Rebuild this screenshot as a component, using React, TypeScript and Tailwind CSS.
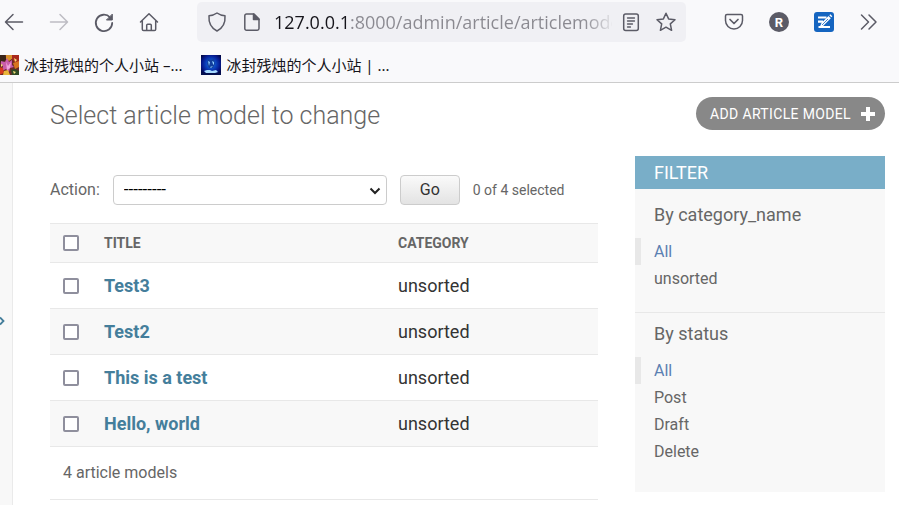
import React from "react";

const stroke = {
  fill: "none",
  stroke: "currentColor",
  strokeWidth: 1.5,
  strokeLinecap: "round" as const,
  strokeLinejoin: "round" as const,
};

function Icon({ children }: { children: React.ReactNode }) {
  return (
    <svg viewBox="0 0 24 24" className="size-6" aria-hidden="true" {...stroke}>
      {children}
    </svg>
  );
}

function ToolButton({ label, dim, children }: { label: string; dim?: boolean; children: React.ReactNode }) {
  return (
    <button type="button" aria-label={label} disabled={dim} className={dim ? "shrink-0 text-[#bdbcc3]" : "shrink-0 text-[#5b5b66]"}>
      {children}
    </button>
  );
}

function FlowerFavicon() {
  return (
    <svg viewBox="1 0 19 20" className="h-5 w-[19px] shrink-0" aria-hidden="true">
      <rect width="20" height="20" fill="#6b2a26" />
      <path d="M0 0h6l2 4-5 4-3-1z" fill="#3a2418" />
      <path d="M7 0h6l1 3-4 3-3-2z" fill="#d8902c" />
      <path d="M13 0h7v7l-4 1-3-4z" fill="#a8281c" />
      <path d="M2 6l4 1 2-4 2 4 3-2v5l2 2-4 1-1 4-3-3-4 2 1-5-2-2z" fill="#c95cab" />
      <path d="M7 7l2 4 3-4-1 6-3 2z" fill="#efa6dc" />
      <path d="M0 12l4 1 1 5-5 2z" fill="#d83a1e" />
      <path d="M5 16l4-1 2 5H4z" fill="#e9b63a" />
      <path d="M14 8l6-2v6l-4 2z" fill="#d8741f" />
      <path d="M12 15l4-1 4 2v4h-7z" fill="#2f4a24" />
      <path d="M15 3l3 2-2 2zM2 9l2 1-2 2zM14 16l3 1-2 2z" fill="#f6e27a" />
    </svg>
  );
}

function NightFavicon() {
  return (
    <svg viewBox="0 0 20 20" className="size-5 shrink-0" aria-hidden="true">
      <defs>
        <radialGradient id="glow" cx="0.5" cy="0.45" r="0.6">
          <stop offset="0" stopColor="#3f9cf0" />
          <stop offset="0.35" stopColor="#0c4cc8" />
          <stop offset="0.75" stopColor="#061a8e" />
          <stop offset="1" stopColor="#030a4a" />
        </radialGradient>
      </defs>
      <rect width="20" height="20" fill="url(#glow)" />
      <path d="M7 4l3 1 3-1 1 5-2 4H8L6 9z" fill="#123f9c" />
      <path d="M7 6l2 1-1 4zM11 6l2 1v3l-1-1zM9 12l3-1-2 2z" fill="#8fd0ff" />
      <path d="M3 16l3-1h3l2 1 4-1 2 2-3 1H5z" fill="#a8dcff" />
      <path d="M0 18h20v2H0z" fill="#04104f" />
    </svg>
  );
}

function Toolbar() {
  return (
    <div className="flex h-11 items-center pr-[18px] pl-0.5">
      <nav className="flex items-center gap-[21px]" aria-label="Navigation">
        <ToolButton label="Back">
          <Icon>
            <path d="M20.500 12H4M11 4.500 3.500 12l7.500 7.500" />
          </Icon>
        </ToolButton>
        <ToolButton label="Forward" dim>
          <Icon>
            <path d="M3.500 12H20M13 4.500l7.500 7.500-7.500 7.500" />
          </Icon>
        </ToolButton>
        <ToolButton label="Reload">
          <Icon>
            <path d="M18 7.300A8.200 8.200 0 1 0 20.200 13" strokeWidth="1.800" />
            <path d="M20.300 4.500v5.500h-5.500z" fill="currentColor" strokeWidth="1" />
          </Icon>
        </ToolButton>
        <ToolButton label="Home">
          <Icon>
            <path d="M3.500 12 12 3.800l8.500 8.200M5.300 10.500v8.700a1.300 1.300 0 0 0 1.300 1.300h10.800a1.300 1.300 0 0 0 1.300-1.300v-8.700M9.700 20.300v-5a1 1 0 0 1 1-1h2.600a1 1 0 0 1 1 1v5" />
          </Icon>
        </ToolButton>
      </nav>

      <div className="mr-9 ml-9 flex h-10 min-w-0 flex-1 items-center rounded-[5px] bg-[#f0f0f4] pr-2 pl-2 text-[#5b5b66]">
        <Icon>
          <path d="M12 3c2.500 1.800 5 2.600 8 2.800.5 6.700-2 12.200-8 15.200-6-3-8.500-8.500-8-15.200C7 5.600 9.500 4.800 12 3z" />
        </Icon>
        <span className="ml-[11px] shrink-0">
          <Icon>
            <path d="M6.500 4h7.500l5 5v9.500a1.700 1.700 0 0 1-1.700 1.700H6.500a1.700 1.700 0 0 1-1.700-1.700V5.700A1.700 1.700 0 0 1 6.500 4z" />
            <path d="M13.500 4v5.500H19z" fill="currentColor" />
          </Icon>
        </span>
        <input
          type="text"
          aria-label="Address"
          defaultValue="127.0.0.1:8000/admin/article/articlemode"
          className="ml-2.5 h-8 min-w-0 flex-1 bg-[linear-gradient(to_right,#15141a_76px,#8a8990_76px,#8a8990_310px,#f0f0f4_342px)] bg-clip-text font-['Open_Sans','Noto_Sans',sans-serif] text-lg text-transparent caret-black outline-none"
        />
        <button type="button" aria-label="Reader view" className="mr-[11px] ml-[7px] shrink-0">
          <Icon>
            <rect x="4.700" y="4" width="14.600" height="16.500" rx="2" />
            <path d="M8.500 8h7M8.500 11h7M8.500 14h5M8.500 17h3" strokeWidth="1.300" />
          </Icon>
        </button>
        <button type="button" aria-label="Bookmark this page" className="shrink-0">
          <Icon>
            <path d="M12 3.200l2.600 5.700 6.400.8-4.700 4.200 1.300 6.400L12 17.200l-5.600 3.100 1.300-6.400L3 9.700l6.400-.8z" />
          </Icon>
        </button>
      </div>

      <div className="flex items-center gap-[21px]">
        <ToolButton label="Save to Pocket">
          <Icon>
            <path d="M5 4.500h14a1.500 1.500 0 0 1 1.500 1.500v4.500a8.500 8.500 0 0 1-17 0V6A1.500 1.500 0 0 1 5 4.500z" />
            <path d="M8 9.500l4 4 4-4" strokeWidth="1.700" />
          </Icon>
        </ToolButton>
        <button type="button" aria-label="R extension" className="flex size-6 shrink-0 items-center justify-center">
          <span className="flex size-5 items-center justify-center rounded-full bg-[#5b5b66] font-['Roboto',sans-serif] text-[13px] leading-none font-bold text-white">R</span>
        </button>
        <ToolButton label="Notes extension">
          <svg viewBox="0 0 24 24" className="size-6" aria-hidden="true">
            <rect x="2" y="2" width="20" height="20" rx="3" fill="#1565c0" />
            <path d="M6 7.500h8.500M6 11.700h5M6.500 17h11.500" stroke="#fff" strokeWidth="2.200" fill="none" />
            <path d="M7.500 17.500l2-4.500 7-7 2.300 2.300-7 7z" fill="#fff" />
            <path d="M17.300 5.200l1-1 2 2-1 1z" fill="#fff" />
            <path d="M10 15l6-6" stroke="#1565c0" strokeWidth="0.800" />
          </svg>
        </ToolButton>
        <ToolButton label="More tools">
          <Icon>
            <path d="M4.500 5l7 7-7 7M12 5l7 7-7 7" />
          </Icon>
        </ToolButton>
      </div>
    </div>
  );
}

function Bookmarks() {
  return (
    <nav aria-label="Bookmarks" className="flex h-[38px] items-center gap-[19px] pt-1 font-['Noto_Sans','Noto_Sans_CJK_SC',sans-serif] text-[15px] leading-5 whitespace-nowrap text-[#15141a]">
      <a href="#site-one" className="flex items-center gap-[5px]">
        <FlowerFavicon />
        冰封残烛的个人小站 –...
      </a>
      <a href="#site-two" className="flex items-center gap-[5px]">
        <NightFavicon />
        冰封残烛的个人小站 | ...
      </a>
    </nav>
  );
}

const box =
  "block size-4 appearance-none rounded-[2px] border-2 border-[#8f8f9d] bg-white checked:bg-[#417690]";

const articles = ["Test3", "Test2", "This is a test", "Hello, world"];

function Actions() {
  return (
    <div className="flex items-center text-base text-[#666]">
      <label htmlFor="action" className="mr-[13px]">Action:</label>
      <div className="relative w-1/2">
        <select id="action" className="h-[30px] w-full appearance-none rounded border border-[#ccc] bg-white px-2.5 text-[17px] text-black">
          <option>---------</option>
        </select>
        <svg viewBox="0 0 12 8" className="pointer-events-none absolute top-3 right-1.5 h-2 w-3" fill="none" stroke="#222" strokeWidth="2" aria-hidden="true">
          <path d="M1.500 1.500L6 6l4.500-4.500" />
        </svg>
      </div>
      <button type="button" className="mx-[13px] h-[30px] w-[60px] rounded border border-[#ccc] bg-linear-to-b from-[#fafafa] to-[#e3e3e3] text-base text-[#333]">
        Go
      </button>
      <span className="text-sm">0 of 4 selected</span>
    </div>
  );
}

function Results() {
  return (
    <table className="mt-[18px] w-full table-fixed border-collapse text-left">
      <thead>
        <tr className="h-[39px] border-y border-[#e8e8e8] bg-[#f8f8f8] text-sm text-[#666]">
          <th className="w-[41px] pl-[13px]">
            <input type="checkbox" aria-label="Select all" className={box} />
          </th>
          <th className="pl-[13px] font-bold">TITLE</th>
          <th className="w-[213px] pl-[13px] font-bold">CATEGORY</th>
        </tr>
      </thead>
      <tbody>
        {articles.map((title) => (
          <tr key={title} className="h-[46px] border-b border-[#e8e8e8] text-lg text-[#333] even:bg-[#f8f8f8]">
            <td className="pl-[13px]">
              <input type="checkbox" aria-label={title} className={box} />
            </td>
            <th scope="row" className="pl-[13px] font-bold">
              <a href="#article" className="text-[#447e9b]">{title}</a>
            </th>
            <td className="pl-[13px]">unsorted</td>
          </tr>
        ))}
      </tbody>
    </table>
  );
}

function FilterGroup({ title, items, last }: { title: string; items: string[]; last?: boolean }) {
  return (
    <section className={last ? "pt-2.5 pb-5" : "border-b border-[#e8e8e8] pt-2.5 pb-5"}>
      <h3 className="px-[19px] text-lg leading-[22px]">{title}</h3>
      <ul className="mt-3">
        {items.map((item, i) => (
          <li key={item} className={i === 0 ? "border-l-6 border-[#e8e8e8] pl-[13px] text-[#5b80b2]" : "pl-[19px]"}>
            <a href="#filter" className="block text-base leading-[27px]">{item}</a>
          </li>
        ))}
      </ul>
    </section>
  );
}

export default function App() {
  return (
    <div className="flex h-screen flex-col overflow-hidden bg-white">
      <header className="shrink-0 border-b border-[#cccccc] bg-[#f9f9fb]">
        <Toolbar />
        <Bookmarks />
      </header>
      <div className="flex min-h-0 flex-1 font-['Roboto',sans-serif]">
        <div className="w-[13px] shrink-0 border-r border-[#eaeaea] bg-[#f8f8f8] pt-[233px]">
          <button type="button" aria-label="Toggle navigation" className="block">
            <svg viewBox="0 0 5 10" className="h-2.5 w-[5px]" fill="none" stroke="#447e9b" strokeWidth="1.800" aria-hidden="true">
              <path d="M0 1.500L3.500 5 0 8.500" />
            </svg>
          </button>
        </div>
        <main className="min-w-0 flex-1 pt-3.5 pr-3.5 pl-[37px] text-[#666]">
          <div className="flex items-start justify-between">
            <h1 className="pt-[5px] text-[25px] leading-7 font-light">Select article model to change</h1>
            <a href="#add" className="flex h-[33px] items-center gap-2.5 rounded-full bg-[#888] pr-2.5 pl-3.5 text-sm tracking-wide text-white">
              ADD ARTICLE MODEL
              <svg viewBox="0 0 14 14" className="size-3.5" fill="none" stroke="#fff" strokeWidth="4" strokeLinejoin="round" aria-hidden="true">
                <path d="M7 0v14M0 7h14" />
              </svg>
            </a>
          </div>
          <div className="mt-[26px] flex items-start gap-[37px]">
            <div className="min-w-0 flex-1 pt-[19px]">
              <Actions />
              <Results />
              <p className="border-b border-[#e8e8e8] px-[13px] py-3.5 text-base leading-6">4 article models</p>
            </div>
            <aside className="w-[250px] shrink-0 bg-[#f8f8f8] pb-[7px]">
              <h2 className="mb-[5px] bg-[#79aec8] px-[19px] text-lg leading-[33px] text-white">FILTER</h2>
              <FilterGroup title="By category_name" items={["All", "unsorted"]} />
              <FilterGroup title="By status" items={["All", "Post", "Draft", "Delete"]} last />
            </aside>
          </div>
        </main>
      </div>
    </div>
  );
}
